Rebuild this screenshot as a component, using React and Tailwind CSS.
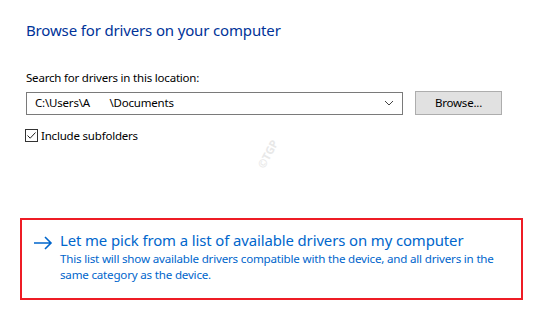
import React from "react";

const App = () => {
  return (
    <div
      className="relative w-[537px] h-[314px] bg-white overflow-hidden"
      style={{ fontFamily: '"Noto Sans", "Open Sans", sans-serif' }}
    >
      <div className="pl-[26px] pt-[20px]">
        <h1 className="text-[15px] leading-[20px] text-[#003399] tracking-[-0.15px]">
          Browse for drivers on your computer
        </h1>
        <p className="mt-[30px] text-[11.5px] leading-[16px] text-black tracking-[-0.2px]">
          Search for drivers in this location:
        </p>
        <div className="mt-[5px] flex items-center gap-[12px]">
          <div className="flex items-center w-[377px] h-[23px] border border-[#7a7a7a] pl-[8px] pr-[6px] text-[11.5px] text-black">
            <span className="flex-1 tracking-[-0.2px]">C:\Users\A&nbsp;&nbsp;&nbsp;&nbsp;&nbsp;&nbsp;&nbsp;\Documents</span>
            <svg width="10" height="6" viewBox="0 0 10 6" className="mr-[2px]">
              <path d="M1 1 L5 5 L9 1" fill="none" stroke="#444" strokeWidth="1" />
            </svg>
          </div>
          <button className="w-[87px] h-[24px] bg-[#e1e1e1] border border-[#adadad] text-[11.5px] text-black tracking-[-0.2px]">
            Browse...
          </button>
        </div>
        <label className="mt-[12px] flex items-center gap-[3px] text-[11.5px] text-black">
          <span className="ml-[-1px] w-[13px] h-[13px] border border-[#333] flex items-center justify-center">
            <svg width="11" height="11" viewBox="0 0 11 11">
              <path d="M1.5 5.5 L4.2 8.2 L9.5 2.5" fill="none" stroke="#222" strokeWidth="1" />
            </svg>
          </span>
          <span className="tracking-[-0.2px]">Include subfolders</span>
        </label>
      </div>

      <span className="absolute left-[253px] top-[146px] -rotate-[62deg] text-[11px] font-bold text-[#e8e8e8] select-none">
        ©TGP
      </span>

      <div className="mt-[74px] ml-[20px] w-[503px] h-[82px] border-2 border-[#ee1c25] flex pl-[11px] pt-[10px]">
        <svg width="20" height="14" viewBox="0 0 20 14" className="mt-[6px] shrink-0">
          <path d="M1 7 H18 M12 1 L18 7 L12 13" fill="none" stroke="#0066cc" strokeWidth="1.6" />
        </svg>
        <div className="ml-[7px] text-[#0066cc]">
          <div className="text-[14.9px] leading-[20px] tracking-[-0.1px]">
            Let me pick from a list of available drivers on my computer
          </div>
          <div className="text-[11.6px] leading-[16px] tracking-[-0.2px] mt-[1px]">
            This list will show available drivers compatible with the device, and all drivers in the
            <br />
            same category as the device.
          </div>
        </div>
      </div>
    </div>
  );
};

export default App;
